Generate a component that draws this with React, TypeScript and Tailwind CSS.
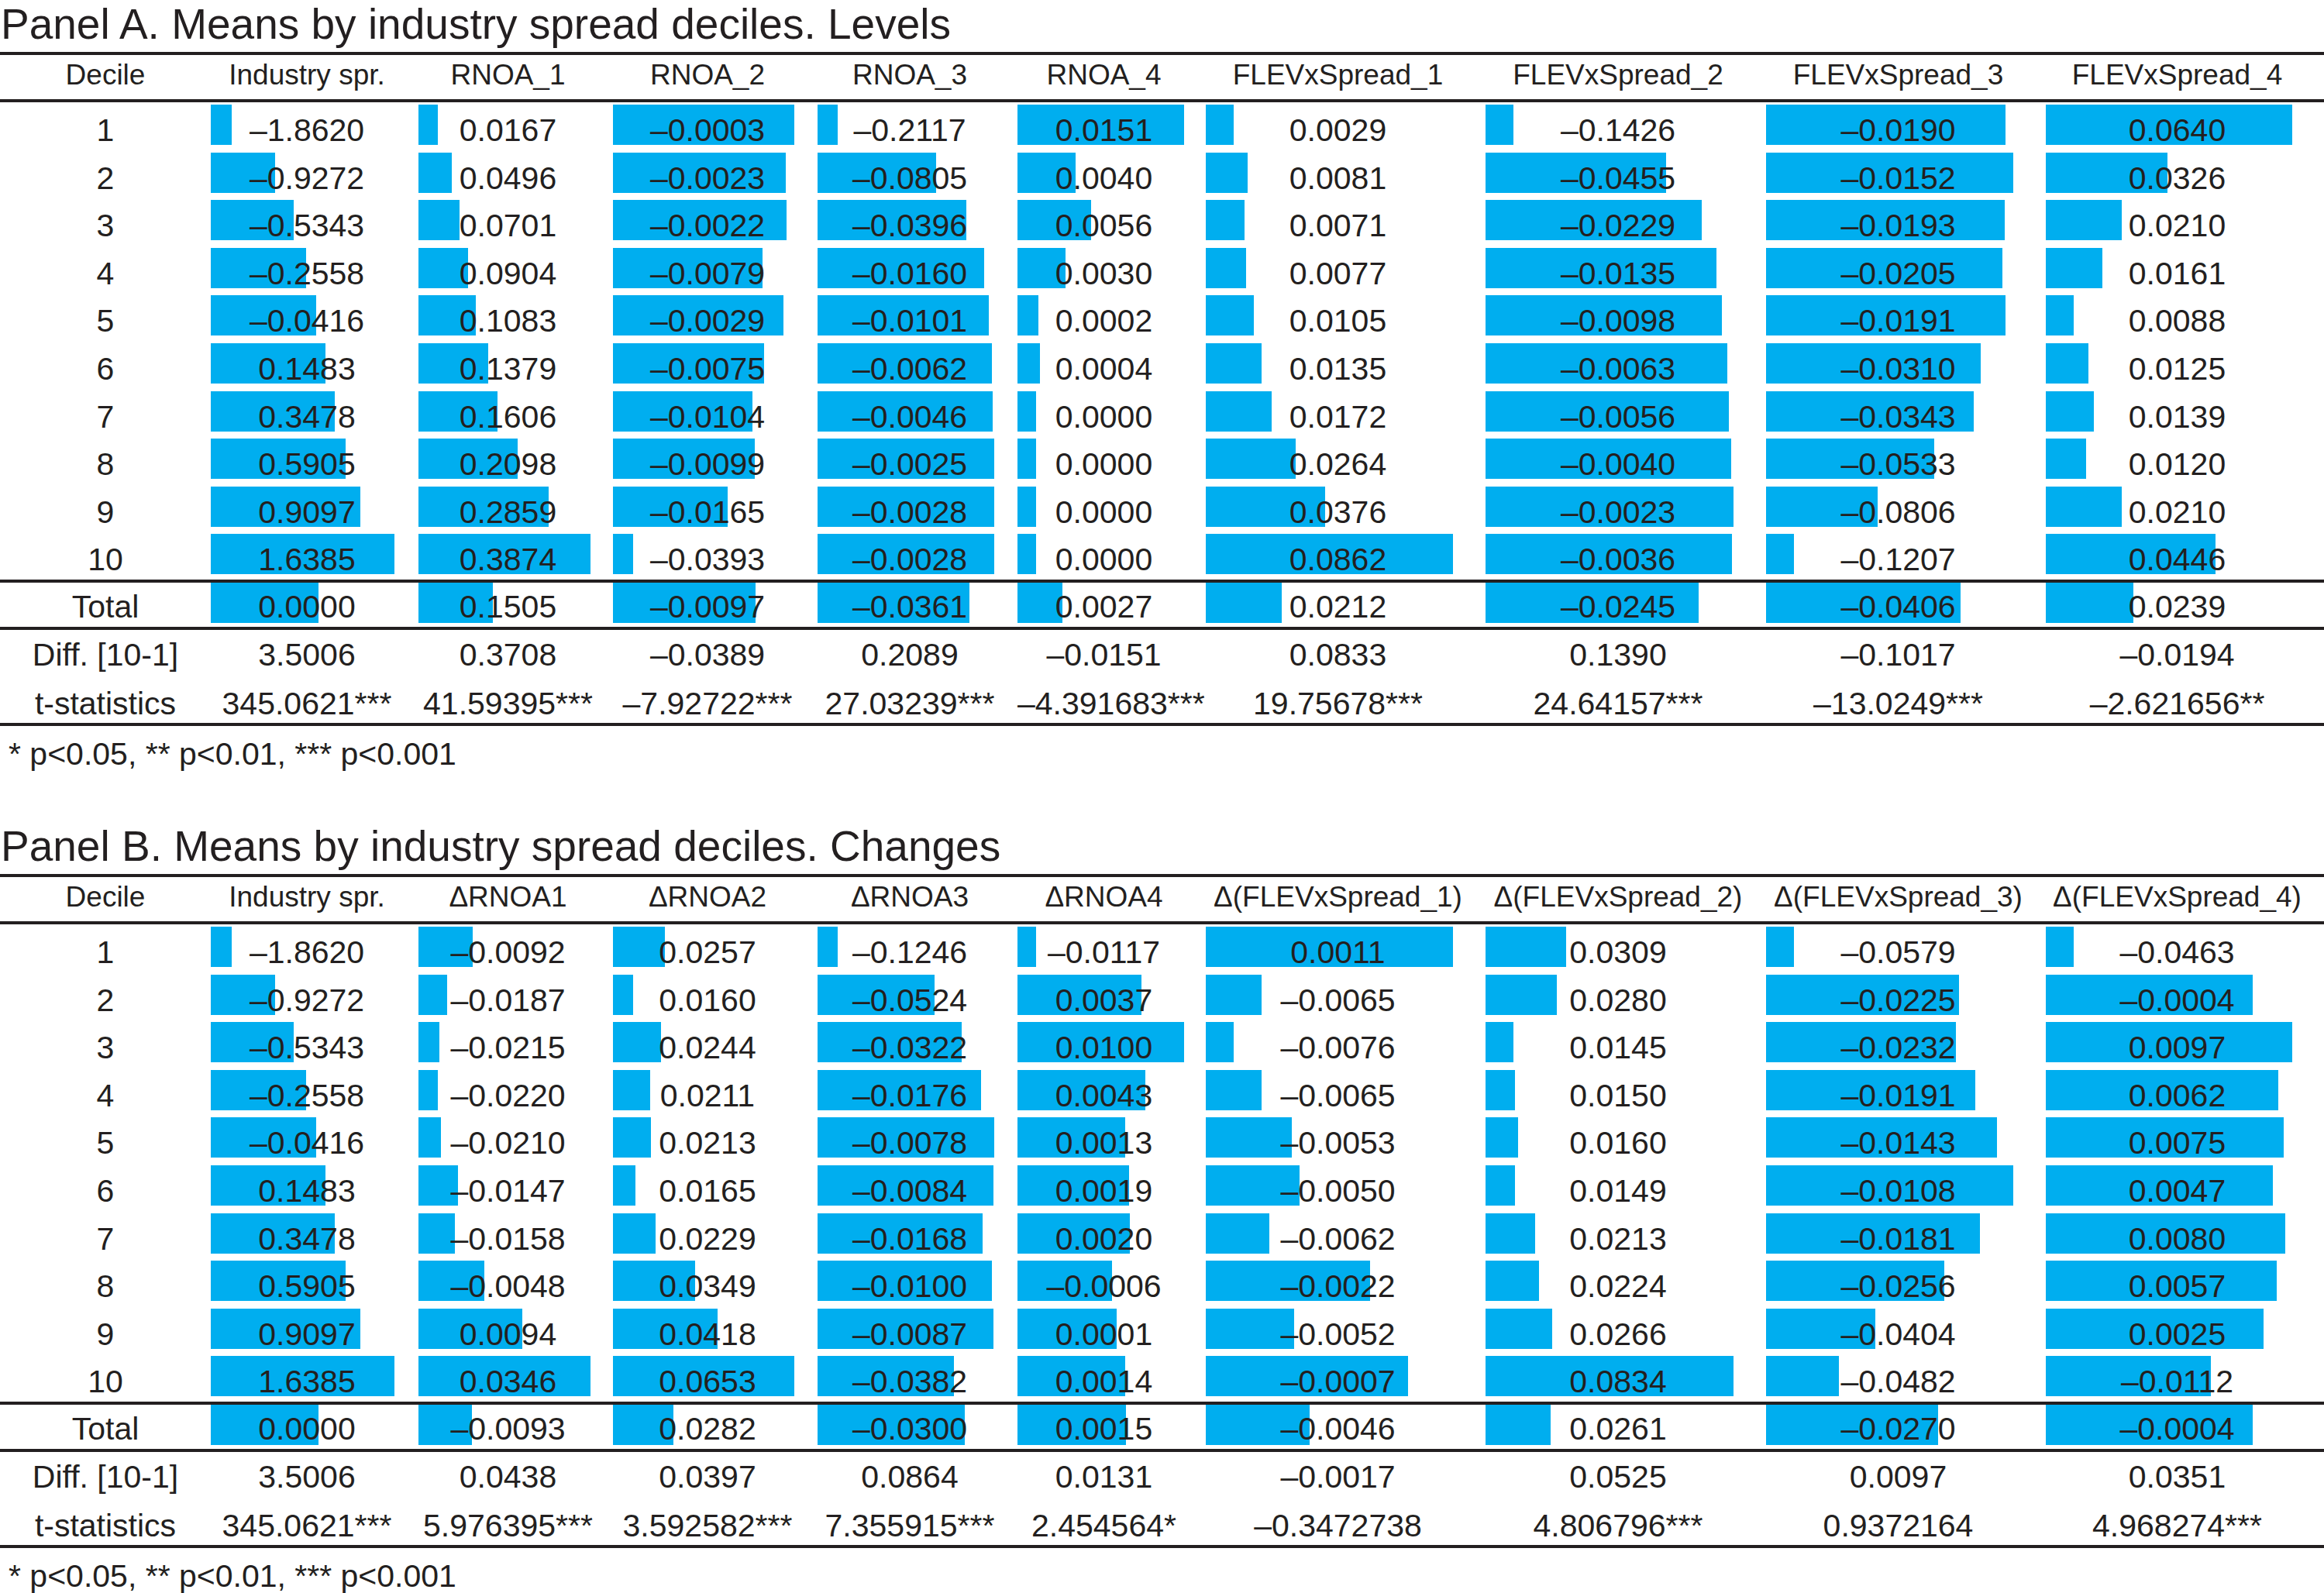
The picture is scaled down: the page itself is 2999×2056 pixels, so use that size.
import React from "react";

const GRID =
  "grid grid-cols-[272px_268px_251px_264px_258px_243px_361px_362px_361px_359px]";
const WIDTHS = [268, 251, 264, 258, 243, 361, 362, 361, 359];

type PanelData = {
  title: string;
  headers: string[];
  rows: string[][];
  total: string[];
  diff: string[];
  tstat: string[];
};

const num = (s: string) => parseFloat(s.replace("\u2013", "-"));

const panelA: PanelData = {
  title: "Panel A. Means by industry spread deciles. Levels",
  headers: ["Decile", "Industry spr.", "RNOA_1", "RNOA_2", "RNOA_3", "RNOA_4", "FLEVxSpread_1", "FLEVxSpread_2", "FLEVxSpread_3", "FLEVxSpread_4"],
  rows: [
    ["–1.8620", "0.0167", "–0.0003", "–0.2117", "0.0151", "0.0029", "–0.1426", "–0.0190", "0.0640"],
    ["–0.9272", "0.0496", "–0.0023", "–0.0805", "0.0040", "0.0081", "–0.0455", "–0.0152", "0.0326"],
    ["–0.5343", "0.0701", "–0.0022", "–0.0396", "0.0056", "0.0071", "–0.0229", "–0.0193", "0.0210"],
    ["–0.2558", "0.0904", "–0.0079", "–0.0160", "0.0030", "0.0077", "–0.0135", "–0.0205", "0.0161"],
    ["–0.0416", "0.1083", "–0.0029", "–0.0101", "0.0002", "0.0105", "–0.0098", "–0.0191", "0.0088"],
    ["0.1483", "0.1379", "–0.0075", "–0.0062", "0.0004", "0.0135", "–0.0063", "–0.0310", "0.0125"],
    ["0.3478", "0.1606", "–0.0104", "–0.0046", "0.0000", "0.0172", "–0.0056", "–0.0343", "0.0139"],
    ["0.5905", "0.2098", "–0.0099", "–0.0025", "0.0000", "0.0264", "–0.0040", "–0.0533", "0.0120"],
    ["0.9097", "0.2859", "–0.0165", "–0.0028", "0.0000", "0.0376", "–0.0023", "–0.0806", "0.0210"],
    ["1.6385", "0.3874", "–0.0393", "–0.0028", "0.0000", "0.0862", "–0.0036", "–0.1207", "0.0446"],
  ],
  total: ["0.0000", "0.1505", "–0.0097", "–0.0361", "0.0027", "0.0212", "–0.0245", "–0.0406", "0.0239"],
  diff: ["3.5006", "0.3708", "–0.0389", "0.2089", "–0.0151", "0.0833", "0.1390", "–0.1017", "–0.0194"],
  tstat: ["345.0621***", "41.59395***", "–7.92722***", "27.03239***", "–4.391683***", "19.75678***", "24.64157***", "–13.0249***", "–2.621656**"],
};

const panelB: PanelData = {
  title: "Panel B. Means by industry spread deciles. Changes",
  headers: ["Decile", "Industry spr.", "ΔRNOA1", "ΔRNOA2", "ΔRNOA3", "ΔRNOA4", "Δ(FLEVxSpread_1)", "Δ(FLEVxSpread_2)", "Δ(FLEVxSpread_3)", "Δ(FLEVxSpread_4)"],
  rows: [
    ["–1.8620", "–0.0092", "0.0257", "–0.1246", "–0.0117", "0.0011", "0.0309", "–0.0579", "–0.0463"],
    ["–0.9272", "–0.0187", "0.0160", "–0.0524", "0.0037", "–0.0065", "0.0280", "–0.0225", "–0.0004"],
    ["–0.5343", "–0.0215", "0.0244", "–0.0322", "0.0100", "–0.0076", "0.0145", "–0.0232", "0.0097"],
    ["–0.2558", "–0.0220", "0.0211", "–0.0176", "0.0043", "–0.0065", "0.0150", "–0.0191", "0.0062"],
    ["–0.0416", "–0.0210", "0.0213", "–0.0078", "0.0013", "–0.0053", "0.0160", "–0.0143", "0.0075"],
    ["0.1483", "–0.0147", "0.0165", "–0.0084", "0.0019", "–0.0050", "0.0149", "–0.0108", "0.0047"],
    ["0.3478", "–0.0158", "0.0229", "–0.0168", "0.0020", "–0.0062", "0.0213", "–0.0181", "0.0080"],
    ["0.5905", "–0.0048", "0.0349", "–0.0100", "–0.0006", "–0.0022", "0.0224", "–0.0256", "0.0057"],
    ["0.9097", "0.0094", "0.0418", "–0.0087", "0.0001", "–0.0052", "0.0266", "–0.0404", "0.0025"],
    ["1.6385", "0.0346", "0.0653", "–0.0382", "0.0014", "–0.0007", "0.0834", "–0.0482", "–0.0112"],
  ],
  total: ["0.0000", "–0.0093", "0.0282", "–0.0300", "0.0015", "–0.0046", "0.0261", "–0.0270", "–0.0004"],
  diff: ["3.5006", "0.0438", "0.0397", "0.0864", "0.0131", "–0.0017", "0.0525", "0.0097", "0.0351"],
  tstat: ["345.0621***", "5.976395***", "3.592582***", "7.355915***", "2.454564*", "–0.3472738", "4.806796***", "0.9372164", "4.968274***"],
};

// excel-style data bars: 10% min length, ~88% max length of the cell
function barWidth(col: number, v: number, all: number[]) {
  const min = Math.min(...all);
  const max = Math.max(...all);
  const t = max === min ? 1 : (v - min) / (max - min);
  return Math.round(WIDTHS[col] * (0.1 + 0.785 * t));
}

function BarRow({ label, vals, cols, tall }: { label: string; vals: string[]; cols: number[][]; tall?: boolean }) {
  return (
    <div className={`${GRID} ${tall ? "h-[61.6px]" : "h-[57px]"}`}>
      <div className={`${tall ? "pt-[12px]" : "pt-[7px]"} leading-[48px] text-center`}>{label}</div>
      {vals.map((v, j) => (
        <div key={j} className="grid">
          <div
            className={`col-start-1 row-start-1 self-start ${tall ? "mt-[3px]" : "mt-0"} h-[52px] bg-[#00aeef]`}
            style={{ width: barWidth(j, num(v), cols[j]) }}
          />
          <div className={`col-start-1 row-start-1 ${tall ? "pt-[12px]" : "pt-[7px]"} pr-[20px] leading-[48px] text-center whitespace-nowrap`}>
            {v}
          </div>
        </div>
      ))}
    </div>
  );
}

function PlainRow({ label, vals, className }: { label: string; vals: string[]; className: string }) {
  return (
    <div className={`${GRID} ${className}`}>
      <div className="pt-[8px] leading-[48px] text-center whitespace-nowrap">{label}</div>
      {vals.map((v, j) => (
        <div key={j} className="pt-[8px] pr-[20px] leading-[48px] text-center whitespace-nowrap">
          {v}
        </div>
      ))}
    </div>
  );
}

function Panel({ data, last }: { data: PanelData; last?: boolean }) {
  const cols = WIDTHS.map((_, j) => [...data.rows.map((r) => num(r[j])), num(data.total[j])]);
  return (
    <div className={last ? "" : "mb-[65px]"}>
      <div className="h-[67px] pl-[1px] text-[55px] leading-[63px] whitespace-nowrap">{data.title}</div>
      <div className="h-[4px] bg-[#231f20]" />
      <div className={`${GRID} h-[57px] text-[37px]`}>
        {data.headers.map((h, j) => (
          <div key={j} className={`pt-[4px] leading-[44px] text-center whitespace-nowrap ${j === 0 ? "" : "pr-[20px]"}`}>
            {h}
          </div>
        ))}
      </div>
      <div className="h-[4px] bg-[#231f20]" />
      {data.rows.map((r, i) => (
        <BarRow key={i} label={String(i + 1)} vals={r} cols={cols} tall />
      ))}
      <div className="h-[4px] bg-[#231f20]" />
      <BarRow label="Total" vals={data.total} cols={cols} />
      <div className="h-[4px] bg-[#231f20]" />
      <PlainRow label="Diff. [10-1]" vals={data.diff} className="h-[63px]" />
      <PlainRow label="t-statistics" vals={data.tstat} className="h-[57px]" />
      <div className="h-[4px] bg-[#231f20]" />
      <div className="h-[59px] pt-[13px] pl-[11px] leading-[46px] whitespace-nowrap">* p&lt;0.05, ** p&lt;0.01, *** p&lt;0.001</div>
    </div>
  );
}

export default function App() {
  return (
    <div className="w-[2999px] h-[2056px] overflow-hidden bg-white text-[#231f20] text-[41px] font-['Liberation_Sans','Arial',sans-serif]">
      <Panel data={panelA} />
      <Panel data={panelB} last />
    </div>
  );
}
